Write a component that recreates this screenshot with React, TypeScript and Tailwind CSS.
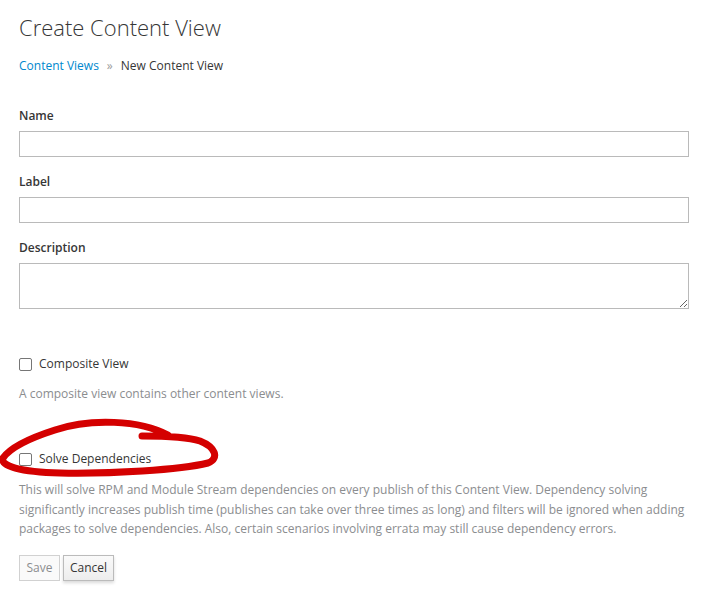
import React from "react";

export default function App() {
  return (
    <div className="relative min-h-[600px] bg-white px-[19px] text-[12px] text-[#363636]" style={{ fontFamily: '"Open Sans", sans-serif' }}>
      <h1 className="pt-[12px] text-[22px] font-light leading-[30px] text-[#363636]">Create Content View</h1>
      <div className="mt-[16px] flex items-center text-[12px] leading-[16px]">
        <a className="text-[#0088ce]">Content Views</a>
        <span className="mx-[8px] text-[#9c9c9c]">»</span>
        <span>New Content View</span>
      </div>

      <div className="mt-[34px] flex flex-col">
        <label className="font-semibold leading-[16px]">Name</label>
        <input className="mt-[7px] h-[26px] w-full border border-[#bababa] bg-white" />
        <label className="mt-[17px] font-semibold leading-[16px]">Label</label>
        <input className="mt-[7px] h-[26px] w-full border border-[#bababa] bg-white" />
        <label className="mt-[17px] font-semibold leading-[16px]">Description</label>
        <textarea className="mt-[7px] h-[46px] w-full border border-[#bababa] bg-white" />
      </div>

      <div className="mt-[47px] flex items-center gap-[7px]">
        <span className="h-[13px] w-[13px] rounded-[2px] border border-[#767676] bg-white" />
        <span className="leading-[16px]">Composite View</span>
      </div>
      <p className="mt-[14px] leading-[16px] text-[#8b8d8f]">A composite view contains other content views.</p>

      <div className="mt-[49px] flex items-center gap-[7px]">
        <span className="h-[13px] w-[13px] rounded-[2px] border border-[#767676] bg-white" />
        <span className="leading-[16px]">Solve Dependencies</span>
      </div>
      <p className="mt-[13px] leading-[19.5px] text-[#8b8d8f]">
        This will solve RPM and Module Stream dependencies on every publish of this Content View. Dependency solving significantly increases publish time (publishes can take over three times as long) and filters will be ignored when adding packages to solve dependencies. Also, certain scenarios involving errata may still cause dependency errors.
      </p>

      <div className="mt-[16px] flex gap-[3px]">
        <button className="h-[26px] border border-[#d1d1d1] bg-[#fafafa] px-[6.5px] text-[#8b8d8f]">Save</button>
        <button className="h-[26px] border border-[#bbbbbb] bg-gradient-to-b from-[#fafafa] to-[#ededed] px-[6px] text-[#363636] shadow-[0_2px_3px_rgba(0,0,0,0.15)]">Cancel</button>
      </div>

      <svg className="pointer-events-none absolute left-0 top-0" width="708" height="600" viewBox="0 0 708 600">
        <path d="M 168 435 C 140 420, 90 418, 55 430 C 30 438, 10 448, 3 458 C 0 466, 20 472, 60 473 C 110 474, 180 470, 208 463 C 220 458, 215 447, 200 441 C 185 436, 160 436, 142 436" fill="none" stroke="#d40000" strokeWidth="7" strokeLinecap="round" />
      </svg>
    </div>
  );
}
